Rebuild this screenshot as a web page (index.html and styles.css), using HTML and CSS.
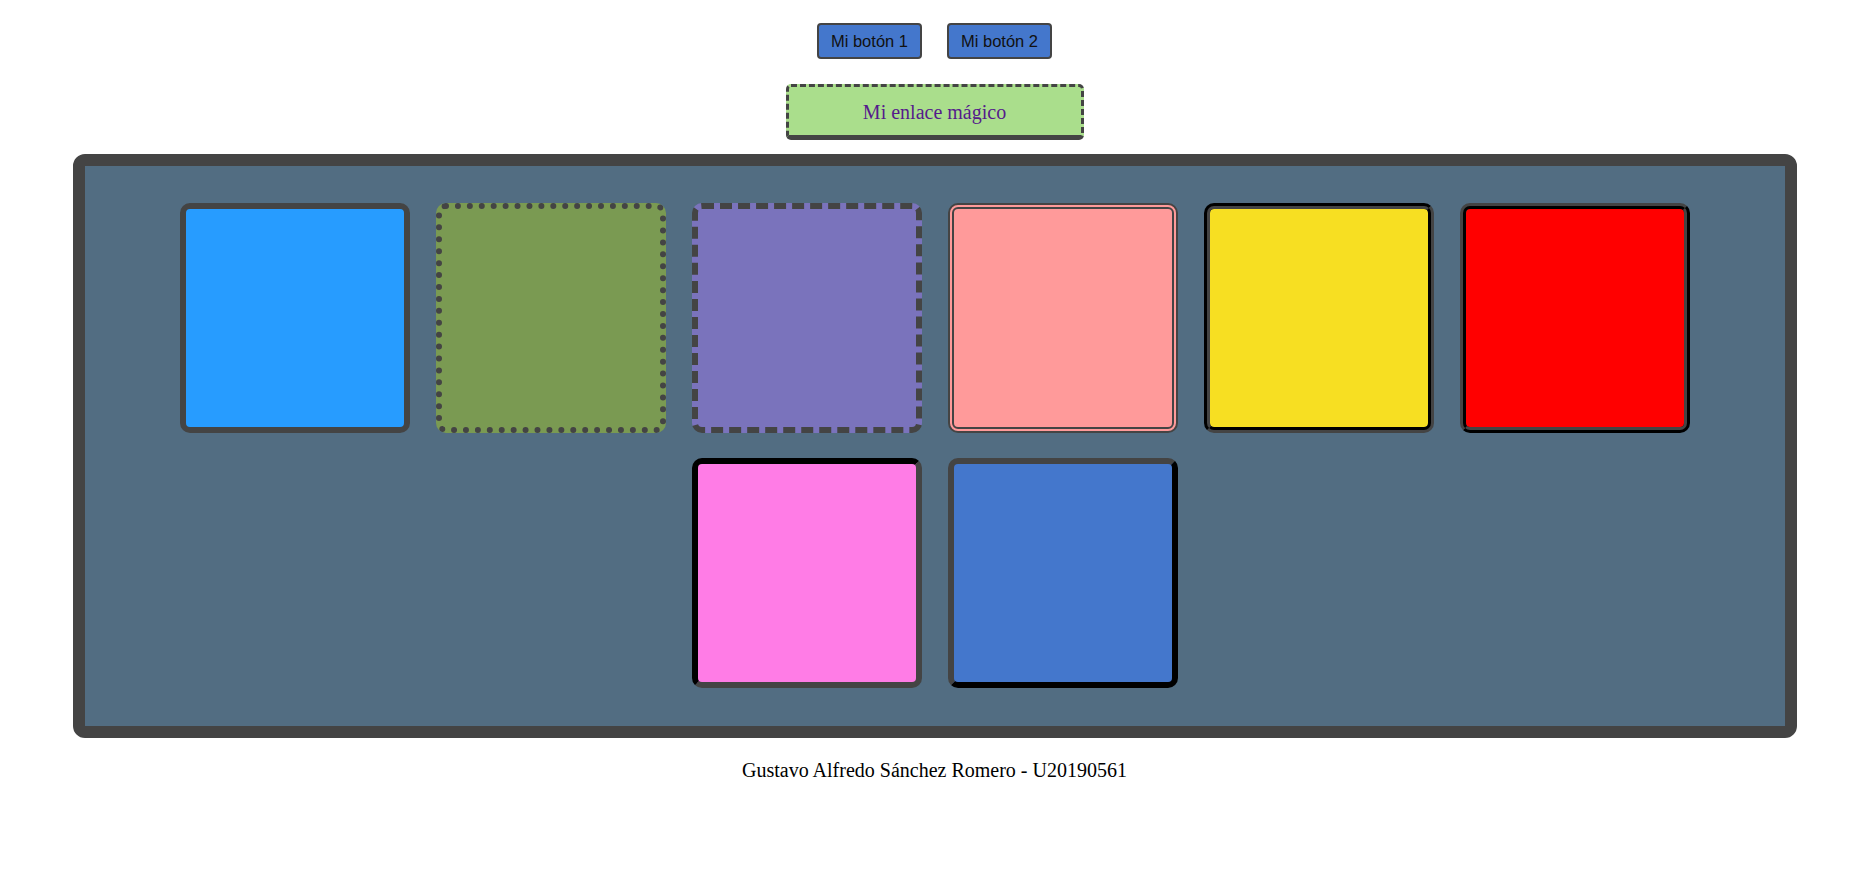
FILE: index.html
```html
<!DOCTYPE html>
<html lang="es">
<head>
<meta charset="utf-8">
<title>Bordes</title>
<link rel="stylesheet" href="styles.css">
</head>
<body>
  <div class="botones">
    <button class="boton">Mi botón 1</button>
    <button class="boton">Mi botón 2</button>
  </div>
  <div class="enlace-wrap">
    <a class="enlace" href="#">Mi enlace mágico</a>
  </div>
  <div class="contenedor">
    <div class="caja caja-solid"></div>
    <div class="caja caja-dotted"></div>
    <div class="caja caja-dashed"></div>
    <div class="caja caja-double"></div>
    <div class="caja caja-groove"></div>
    <div class="caja caja-ridge"></div>
    <div class="caja caja-inset"></div>
    <div class="caja caja-outset"></div>
  </div>
  <p class="autor">Gustavo Alfredo Sánchez Romero - U20190561</p>
</body>
</html>
```

FILE: styles.css
```css
body {
  margin: 8px;
  font-family: "Liberation Serif", "Times New Roman", serif;
  background: #ffffff;
}

.botones {
  display: flex;
  justify-content: center;
  gap: 25px;
  margin-top: 15px;
}

.boton {
  height: 36px;
  padding: 0 12px;
  background: #4477cc;
  border: 2px solid #444444;
  border-radius: 4px;
  font-family: "Liberation Sans", Arial, sans-serif;
  font-size: 16.5px;
  color: #111111;
}

.enlace-wrap {
  display: flex;
  justify-content: center;
  margin-top: 25px;
}

.enlace {
  display: block;
  box-sizing: border-box;
  width: 298px;
  height: 56px;
  padding-top: 1px;
  line-height: 48px;
  text-align: center;
  background: #aade8c;
  border: 3px dashed #444444;
  border-bottom: 5px solid #444444;
  border-radius: 5px;
  color: #551a8b;
  text-decoration: none;
  font-size: 20px;
}

.contenedor {
  box-sizing: border-box;
  width: 1724px;
  margin: 14px auto 0;
  padding: 37px 0 38px;
  background: #526d82;
  border: 12px solid #444444;
  border-radius: 12px;
  display: flex;
  flex-wrap: wrap;
  justify-content: center;
  column-gap: 26px;
  row-gap: 25px;
}

.caja {
  box-sizing: border-box;
  width: 230px;
  height: 230px;
  border: 6px solid #444444;
  border-radius: 10px;
}

.caja-solid { background: #279cff; border-style: solid; }
.caja-dotted { background: #7a9a52; border-style: dotted; }
.caja-dashed { background: #7a73bc; border-style: dashed; }
.caja-double { background: #ff9a9a; border-style: double; }
.caja-groove { background: #f7df22; border-style: groove; }
.caja-ridge { background: #ff0000; border-style: ridge; }
.caja-inset { background: #ff7ce6; border-style: inset; }
.caja-outset { background: #4477cc; border-style: outset; }

.autor {
  text-align: center;
  font-size: 20px;
  margin: 21px 0 20px;
}
```
